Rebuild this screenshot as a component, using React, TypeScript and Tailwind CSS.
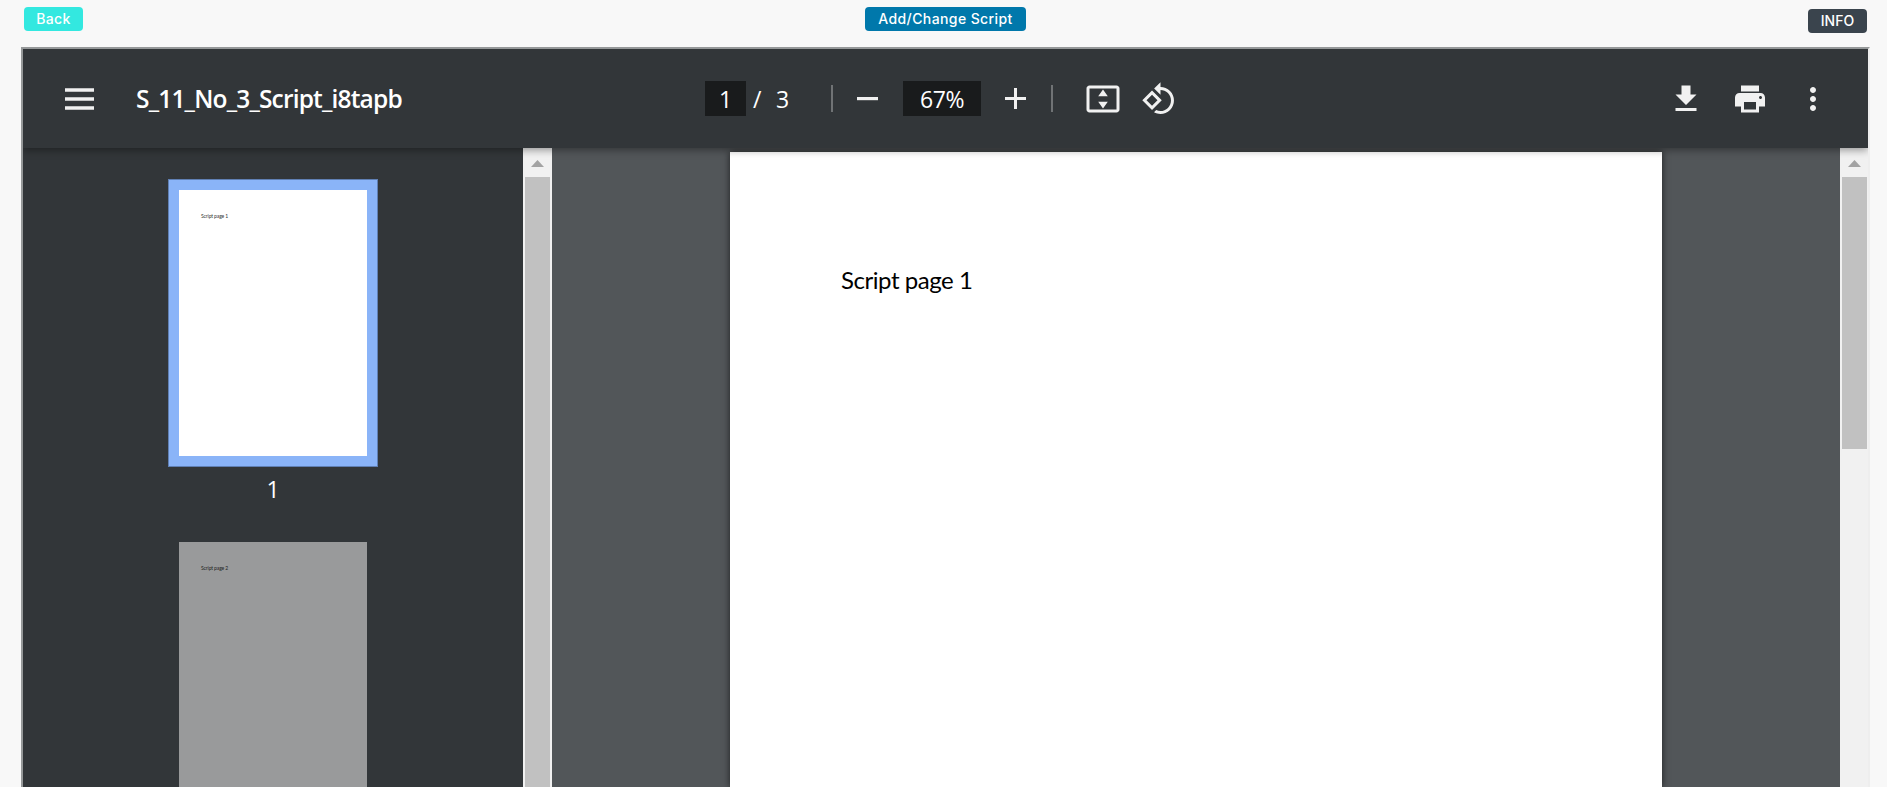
import React from "react";

const rotatePath =
  "M7.34 6.41L.86 12.9l6.49 6.48 6.49-6.48-6.5-6.49zM3.69 12.9l3.66-3.66L11 12.9l-3.66 3.66-3.65-3.66zm15.67-6.26C17.61 4.88 15.3 4 13 4V.76L8.76 5 13 9.24V6c1.79 0 3.58.68 4.95 2.05 2.73 2.73 2.73 7.17 0 9.9C16.58 19.32 14.79 20 13 20c-.97 0-1.94-.21-2.84-.61l-1.49 1.49C10.02 21.62 11.51 22 13 22c2.3 0 4.61-.88 6.36-2.64 3.52-3.51 3.52-9.21 0-12.72z";
const fitPath =
  "M21 3H3c-1.1 0-2 .9-2 2v14c0 1.1.9 2 2 2h18c1.1 0 2-.9 2-2V5c0-1.100-.9-2-2-2zm0 16.010H3V4.990h18v14.020zM8.800 10.200l3.200-4.500 3.200 4.500zM8.800 13.800l3.200 4.500 3.200-4.500z";
const downloadPath = "M19 9h-4V3H9v6H5l7 7 7-7zM5 18v2h14v-2H5z";
const printPath =
  "M19 8H5c-1.660 0-3 1.340-3 3v6h4v4h12v-4h4v-6c0-1.660-1.340-3-3-3zm-3 11H8v-5h8v5zm3-7c-.55 0-1-.45-1-1s.45-1 1-1 1 .45 1 1-.45 1-1 1zm-1-9H6v4h12V3z";
const morePath =
  "M12 8c1.100 0 2-.9 2-2s-.9-2-2-2-2 .9-2 2 .9 2 2 2zm0 2c-1.100 0-2 .9-2 2s.9 2 2 2 2-.9 2-2-.9-2-2-2zm0 6c-1.100 0-2 .9-2 2s.9 2 2 2 2-.9 2-2-.9-2-2-2z";

function Icon({ d, className = "" }: { d: string; className?: string }) {
  return (
    <svg viewBox="0 0 24 24" className={`size-9 shrink-0 fill-[#f1f1f1] ${className}`}>
      <path d={d} />
    </svg>
  );
}

function ScrollTrack({ thumb, className = "" }: { thumb: string; className?: string }) {
  return (
    <div className={`flex shrink-0 flex-col bg-[#f1f1f1] ${className}`}>
      <svg viewBox="0 0 29 29" className="h-[29px] w-[29px] shrink-0 fill-[#a3a3a3]">
        <path d="M8 19L14.500 12L21 19z" />
      </svg>
      <div className={`ml-0.5 w-[25px] bg-[#c1c1c1] ${thumb}`} />
    </div>
  );
}

export default function App() {
  return (
    <div className="flex h-[787px] w-full flex-col overflow-hidden bg-[#f8f8f8]">
      <header className="flex h-[47px] shrink-0 items-start pr-5 pl-6 font-['Inter',sans-serif] text-[14px] leading-6 font-medium text-white">
        <button className="mt-[7px] h-6 w-[59px] rounded bg-[#33e8e0] tracking-[0.3px]">Back</button>
        <button className="mt-[7px] ml-[782px] h-6 w-[161px] rounded bg-[#0078ab]">
          <span className="-mx-2 tracking-[0.4px]">Add/Change Script</span>
        </button>
        <button className="mt-[9px] ml-auto h-6 w-[59px] rounded bg-[#3a444d]">INFO</button>
      </header>

      <main className="ml-[21px] flex w-[1849px] flex-1 flex-col overflow-hidden border-2 border-b-0 border-t-[#959899] border-r-[#eeeeee] border-l-[#959899] bg-[#323639]">
        <div className="z-10 flex h-[99px] shrink-0 items-center bg-[#323639] font-['Open_Sans',sans-serif] text-white shadow-[0_2px_8px_rgba(0,0,0,0.4)]">
          <svg viewBox="0 0 29 22" className="ml-[42px] h-[22px] w-[29px] shrink-0 fill-[#f1f1f1]">
            <path d="M0 0.300h29v3.400H0zM0 9.300h29v3.400H0zM0 18.300h29v3.400H0z" />
          </svg>
          <h1 className="ml-[42px] w-[569px] pt-0.5 text-[24.5px] font-semibold tracking-[-0.83px] whitespace-nowrap">
            S_11_No_3_Script_i8tapb
          </h1>
          <div className="flex h-[35px] w-[41px] items-center justify-center bg-[#191b1c] pt-0.5 text-[23px]">1</div>
          <div className="flex w-[85px] items-center pt-0.5 text-[23px]">
            <span className="ml-[7px] w-[23px]">/</span>
            <span>3</span>
          </div>
          <div className="h-[27px] w-0.5 bg-[#707375]" />
          <svg viewBox="0 0 21 21" className="ml-6 size-[21px] shrink-0 fill-[#f1f1f1]">
            <path d="M0 9h21v3.200H0z" />
          </svg>
          <div className="ml-[25px] flex h-[35px] w-[78px] items-center justify-center bg-[#191b1c] pt-0.5 text-[23px] tracking-[-0.4px]">
            67%
          </div>
          <svg viewBox="0 0 21 21" className="ml-6 size-[21px] shrink-0 fill-[#f1f1f1]">
            <path d="M0 9h9V0h3v9h9v3h-9v9H9v-9H0z" />
          </svg>
          <div className="ml-[25px] h-[27px] w-0.5 bg-[#707375]" />
          <Icon d={fitPath} className="ml-[31.5px]" />
          <Icon d={rotatePath} className="ml-[20px]" />
          <Icon d={downloadPath} className="ml-auto" />
          <Icon d={printPath} className="ml-7" />
          <Icon d={morePath} className="mr-[37.5px] ml-[26.5px]" />
        </div>

        <div className="flex min-h-0 flex-1">
          <aside className="flex w-[500px] shrink-0 flex-col items-center overflow-hidden bg-[#323639] font-['Lato',sans-serif]">
            <div className="mt-[31px] h-[288px] w-[210px] shrink-0 border border-[#6080b4] bg-[#8ab4f8] p-2.5">
              <div className="h-[266px] bg-white pt-[23px] pl-[22px] text-[5px] leading-[6px] tracking-[-0.12px] text-[#333333]">
                Script page 1
              </div>
            </div>
            <div className="mt-[5px] h-[70px] shrink-0 font-['Open_Sans',sans-serif] text-[23px] text-white">1</div>
            <div className="h-[266px] w-[188px] shrink-0 bg-[#999a9b] pt-[23px] pl-[22px] text-[5px] leading-[6px] tracking-[-0.12px] text-[#222222]">
              Script page 2
            </div>
          </aside>
          <ScrollTrack thumb="flex-1" className="w-[29px]" />
          <section className="flex min-w-0 flex-1 overflow-hidden bg-[#525659]">
            <div className="mt-1 ml-[178px] w-[932px] bg-white pt-[112px] pl-[111px] font-['Lato',sans-serif] text-[24px] leading-8 tracking-[-0.45px] text-black shadow-[0_0_7px_rgba(0,0,0,0.65)]">
              Script page 1
            </div>
          </section>
          <ScrollTrack thumb="h-[272px]" className="w-7" />
        </div>
      </main>
    </div>
  );
}
